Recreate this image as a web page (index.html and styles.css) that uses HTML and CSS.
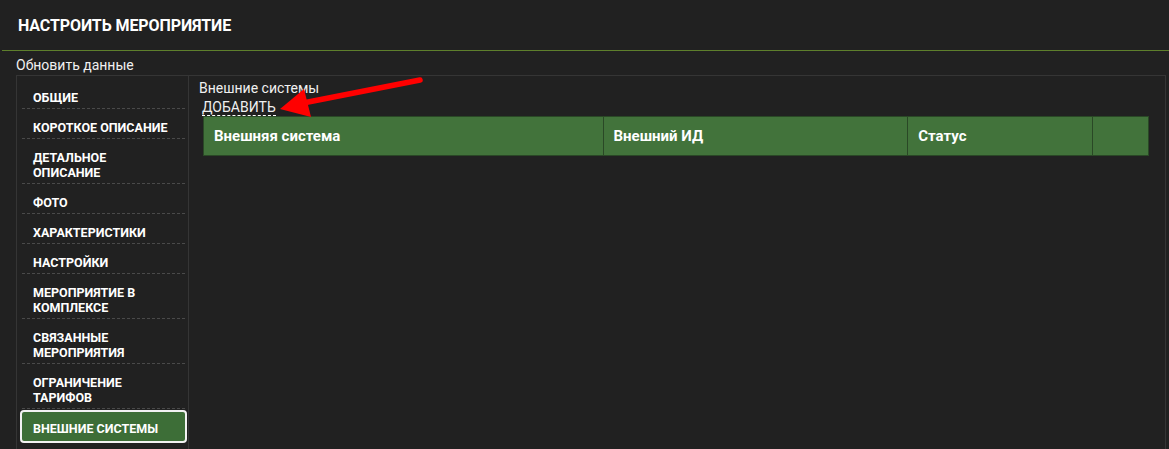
FILE: index.html
```html
<!DOCTYPE html>
<html lang="ru">
<head>
<meta charset="utf-8">
<title>Настроить мероприятие</title>
<link rel="stylesheet" href="styles.css">
</head>
<body>
<header class="page-header">
  <h1 class="page-title">НАСТРОИТЬ МЕРОПРИЯТИЕ</h1>
</header>
<div class="refresh">Обновить данные</div>
<div class="panel">
  <nav class="sidebar">
    <a class="nav-item">ОБЩИЕ</a>
    <a class="nav-item">КОРОТКОЕ ОПИСАНИЕ</a>
    <a class="nav-item">ДЕТАЛЬНОЕ<br>ОПИСАНИЕ</a>
    <a class="nav-item">ФОТО</a>
    <a class="nav-item">ХАРАКТЕРИСТИКИ</a>
    <a class="nav-item">НАСТРОЙКИ</a>
    <a class="nav-item">МЕРОПРИЯТИЕ В<br>КОМПЛЕКСЕ</a>
    <a class="nav-item">СВЯЗАННЫЕ<br>МЕРОПРИЯТИЯ</a>
    <a class="nav-item">ОГРАНИЧЕНИЕ<br>ТАРИФОВ</a>
    <a class="nav-item active">ВНЕШНИЕ СИСТЕМЫ</a>
  </nav>
  <main class="content">
    <div class="section-title">Внешние системы</div>
    <a class="add-link">ДОБАВИТЬ</a>
    <table class="grid">
      <thead>
        <tr>
          <th class="c1">Внешняя система</th>
          <th class="c2">Внешний ИД</th>
          <th class="c3">Статус</th>
          <th class="c4"></th>
        </tr>
      </thead>
    </table>
  </main>
</div>
<svg class="annotation" width="1169" height="449" viewBox="0 0 1169 449">
  <line x1="420" y1="80" x2="298" y2="104" stroke="#ff0000" stroke-width="5.5" stroke-linecap="round"/>
  <polygon points="280,109 304,89 311,117" fill="#ff0000"/>
</svg>
</body>
</html>
```
FILE: styles.css
```css
html, body {
  margin: 0;
  padding: 0;
  background: #212121;
  color: #ffffff;
  font-family: Roboto, "Noto Sans", "Liberation Sans", sans-serif;
  height: 100%;
  overflow: hidden;
}

.page-header {
  margin-left: 2px;
  height: 50px;
  border-bottom: 1px solid #5e7f2c;
  padding-left: 16px;
  display: flex;
  align-items: center;
}

.page-title {
  margin: 0;
  font-size: 16px;
  font-weight: 700;
  letter-spacing: -0.1px;
  line-height: 20px;
  padding-top: 2px;
}

.refresh {
  padding-left: 16px;
  margin-top: 6px;
  font-size: 14px;
  line-height: 17px;
  color: #f0f0f0;
}

.panel {
  margin: 1px 3px 0 16px;
  border: 1px solid #353535;
  border-bottom: none;
  display: flex;
  height: 373px;
}

.sidebar {
  width: 167px;
  padding: 3px 3px 0 5px;
  border-right: 1px solid #353535;
  display: flex;
  flex-direction: column;
}

.nav-item {
  display: block;
  padding: 11px 0 3px 11px;
  font-size: 12.5px;
  font-weight: 700;
  line-height: 15px;
  border-bottom: 1px dashed #4a4a4a;
  color: #ffffff;
}

.nav-item.active {
  margin: 1px -2px 0 -2px;
  padding: 9px 0 5px 11px;
  border: 2px solid #f2f2f2;
  border-radius: 4px;
  background: #3d6e37;
}

.content {
  flex: 1;
  padding: 4px 16px 0 10px;
}

.section-title {
  font-size: 14px;
  line-height: 16px;
  color: #f0f0f0;
}

.add-link {
  display: inline-block;
  margin: 3px 0 0 3px;
  font-size: 14px;
  line-height: 16px;
  color: #f0f0f0;
  border-bottom: 1px dashed #ffffff;
}

.grid {
  display: table;
  margin-left: 4px;
  width: 946px;
  border-collapse: collapse;
  background: #42733b;
}

.grid th {
  height: 38px;
  padding: 0 0 0 10px;
  border: 1px solid #2a4826;
  text-align: left;
  font-size: 15px;
  font-weight: 700;
}

.grid .c1 { width: 389px; }
.grid .c2 { width: 294px; }
.grid .c3 { width: 174px; }
.grid .c4 { width: 45px; }

.annotation {
  position: absolute;
  left: 0;
  top: 0;
  pointer-events: none;
}
```
